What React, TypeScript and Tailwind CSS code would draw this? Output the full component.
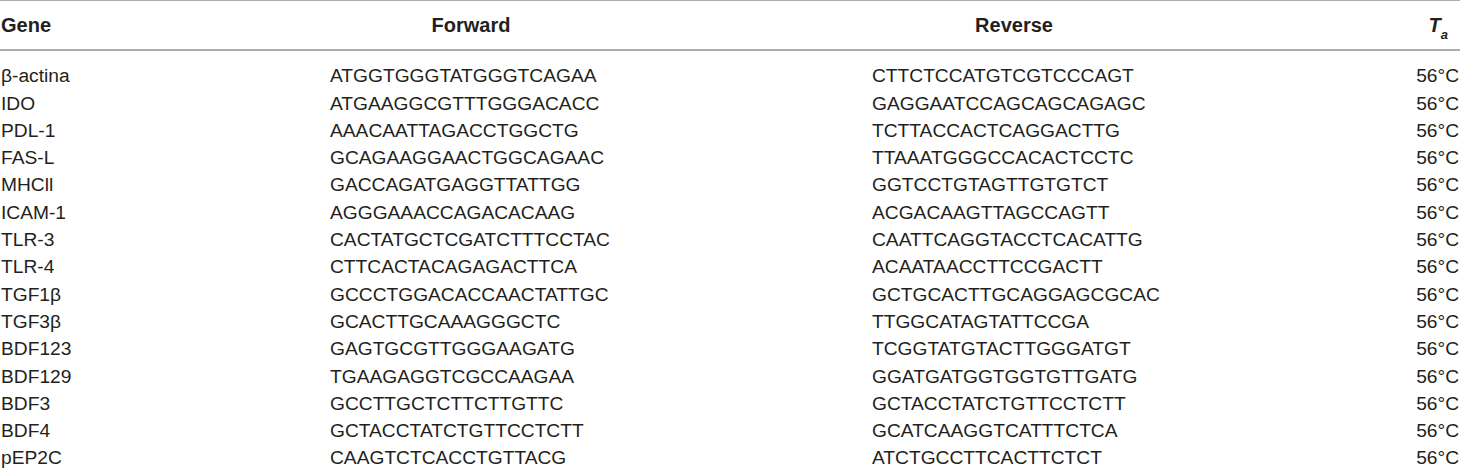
import React from "react";

const rows: [string, string, string][] = [
  ["β-actina", "ATGGTGGGTATGGGTCAGAA", "CTTCTCCATGTCGTCCCAGT"],
  ["IDO", "ATGAAGGCGTTTGGGACACC", "GAGGAATCCAGCAGCAGAGC"],
  ["PDL-1", "AAACAATTAGACCTGGCTG", "TCTTACCACTCAGGACTTG"],
  ["FAS-L", "GCAGAAGGAACTGGCAGAAC", "TTAAATGGGCCACACTCCTC"],
  ["MHCll", "GACCAGATGAGGTTATTGG", "GGTCCTGTAGTTGTGTCT"],
  ["ICAM-1", "AGGGAAACCAGACACAAG", "ACGACAAGTTAGCCAGTT"],
  ["TLR-3", "CACTATGCTCGATCTTTCCTAC", "CAATTCAGGTACCTCACATTG"],
  ["TLR-4", "CTTCACTACAGAGACTTCA", "ACAATAACCTTCCGACTT"],
  ["TGF1β", "GCCCTGGACACCAACTATTGC", "GCTGCACTTGCAGGAGCGCAC"],
  ["TGF3β", "GCACTTGCAAAGGGCTC", "TTGGCATAGTATTCCGA"],
  ["BDF123", "GAGTGCGTTGGGAAGATG", "TCGGTATGTACTTGGGATGT"],
  ["BDF129", "TGAAGAGGTCGCCAAGAA", "GGATGATGGTGGTGTTGATG"],
  ["BDF3", "GCCTTGCTCTTCTTGTTC", "GCTACCTATCTGTTCCTCTT"],
  ["BDF4", "GCTACCTATCTGTTCCTCTT", "GCATCAAGGTCATTTCTCA"],
  ["pEP2C", "CAAGTCTCACCTGTTACG", "ATCTGCCTTCACTTCTCT"],
];

export default function App() {
  return (
    <div
      className="w-[1460px] h-[472px] bg-white overflow-hidden text-[#231f20] text-[19.2px]"
      style={{ fontFamily: '"Liberation Sans", Arial, sans-serif' }}
    >
      <div className="border-t-[1.5px] border-[#ababab] pt-[11px] pb-[10px] border-b-[2px] grid grid-cols-[200px_542px_544px_1fr] font-bold text-[20px] leading-[27.3px]">
        <div className="pl-[1px]">Gene</div>
        <div className="text-center">Forward</div>
        <div className="text-center">Reverse</div>
        <div className="text-right pr-[12px] italic">
          T<sub className="text-[13px] leading-none align-[-4px]">a</sub>
        </div>
      </div>
      <div className="pt-[11px] leading-[27.3px]">
        {rows.map((r) => (
          <div key={r[0]} className="grid grid-cols-[200px_542px_544px_1fr] h-[27.3px]">
            <div className="pl-[1px]">{r[0]}</div>
            <div className="pl-[130px]">{r[1]}</div>
            <div className="pl-[130px]">{r[2]}</div>
            <div className="text-right pr-[1px]">56°C</div>
          </div>
        ))}
      </div>
    </div>
  );
}
